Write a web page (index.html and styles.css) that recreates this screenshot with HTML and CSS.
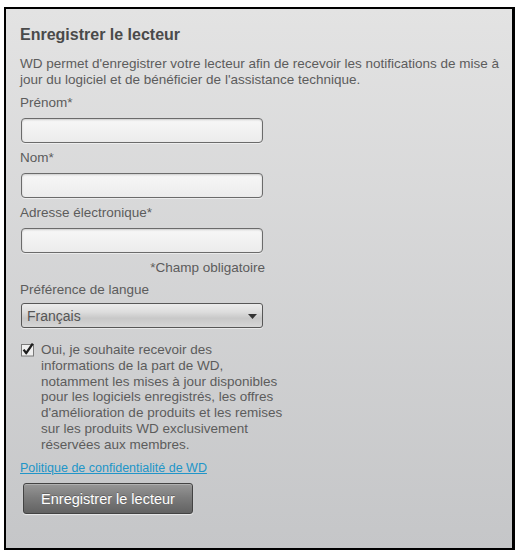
FILE: index.html
```html
<!DOCTYPE html>
<html lang="fr">
<head>
<meta charset="utf-8">
<title>Enregistrer le lecteur</title>
<link rel="stylesheet" href="styles.css">
</head>
<body>
<div class="panel">
  <h1 class="title">Enregistrer le lecteur</h1>
  <p class="intro">WD permet d'enregistrer votre lecteur afin de recevoir les notifications de mise à<br>jour du logiciel et de bénéficier de l'assistance technique.</p>
  <div class="form">
    <label class="label">Prénom*</label>
    <div class="input"></div>
    <label class="label">Nom*</label>
    <div class="input"></div>
    <label class="label">Adresse électronique*</label>
    <div class="input"></div>
    <div class="required">*Champ obligatoire</div>
    <label class="label label-lang">Préférence de langue</label>
    <div class="select">
      <span class="select-text">Français</span>
      <svg class="select-arrow" width="9" height="5" viewBox="0 0 9 5"><path d="M0 0 H9 L4.5 5 Z" fill="#333"/></svg>
    </div>
  </div>
  <div class="optin">
    <svg class="check" width="14" height="14" viewBox="0 0 14 14">
      <rect x="0.5" y="1.5" width="12" height="11.5" fill="#efefef" stroke="#7a7a7a"/>
      <path d="M2.6 6.6 L5.2 10.2 L11.8 0.6" fill="none" stroke="#1e1e1e" stroke-width="2.3" stroke-linejoin="round"/>
    </svg>
    <p class="optin-text">Oui, je souhaite recevoir des<br>informations de la part de WD,<br>notamment les mises à jour disponibles<br>pour les logiciels enregistrés, les offres<br>d'amélioration de produits et les remises<br>sur les produits WD exclusivement<br>réservées aux membres.</p>
  </div>
  <a class="privacy" href="#">Politique de confidentialité de WD</a>
  <div class="actions">
    <button class="btn" type="button">Enregistrer le lecteur</button>
  </div>
</div>
</body>
</html>
```

FILE: styles.css
```css
html, body {
  margin: 0;
  padding: 0;
  background: #ffffff;
}

body {
  font-family: "Liberation Sans", Arial, sans-serif;
  color: #5c5c5c;
}

.panel {
  box-sizing: border-box;
  width: 511px;
  height: 543px;
  margin: 7px 0 0 4px;
  border: 2px solid #000;
  border-right-width: 3px;
  background: linear-gradient(#e3e3e3, #c5c6c8);
  padding: 17px 10px 0 14px;
}

.title {
  margin: 0;
  font-size: 16px;
  line-height: 18px;
  font-weight: bold;
  color: #4a4a4a;
}

.intro {
  margin: 12px 0 0;
  font-size: 13.5px;
  line-height: 16px;
  white-space: nowrap;
}

.form {
  width: 245px;
  display: flex;
  flex-direction: column;
}

.label {
  display: block;
  margin-top: 7px;
  font-size: 13.5px;
  line-height: 16px;
}

.input {
  box-sizing: border-box;
  margin: 7px 0 0 1px;
  width: 242px;
  height: 25px;
  border: 1px solid #6b6b6b;
  border-radius: 4px;
  background: linear-gradient(#f7f7f7, #ececec);
  box-shadow: inset 0 1px 2px rgba(0, 0, 0, 0.18), 0 1px 0 rgba(255, 255, 255, 0.5);
}

.required {
  margin-top: 7px;
  text-align: right;
  font-size: 13.5px;
  line-height: 16px;
}

.label-lang {
  margin-top: 6px;
}

.select {
  box-sizing: border-box;
  margin: 5px 0 0 1px;
  width: 242px;
  height: 25px;
  border: 1px solid #575757;
  border-radius: 3px;
  background: linear-gradient(#ececec 0%, #dddddd 35%, #c8c8c8 62%, #d6d6d6 100%);
  box-shadow: 0 1px 0 rgba(255, 255, 255, 0.5);
  display: flex;
  align-items: center;
  justify-content: space-between;
  padding: 0 5px 0 5px;
}

.select-text {
  font-size: 14px;
  color: #555;
}

.select-arrow {
  display: block;
  margin-top: 1px;
}

.optin {
  display: flex;
  align-items: flex-start;
  margin-top: 14px;
}

.check {
  display: block;
  flex: none;
  margin: 1px 6px 0 1px;
}

.optin-text {
  margin: 0;
  font-size: 13.5px;
  line-height: 15.75px;
  white-space: nowrap;
}

.privacy {
  display: block;
  width: max-content;
  margin-top: 9px;
  font-size: 12.5px;
  line-height: 15px;
  color: #2195c8;
  text-decoration: underline;
}

.actions {
  margin-top: 7px;
}

.btn {
  box-sizing: border-box;
  display: block;
  margin-left: 3px;
  width: 170px;
  height: 31px;
  padding: 0;
  border: 1px solid #434343;
  border-radius: 3px;
  background: linear-gradient(#979797 0%, #7c7c7c 45%, #626262 100%);
  box-shadow: inset 0 1px 0 rgba(255, 255, 255, 0.25), 0 1px 1px rgba(255, 255, 255, 0.6);
  font-family: "Liberation Sans", Arial, sans-serif;
  font-size: 14.5px;
  color: #ffffff;
  text-shadow: 0 -1px 0 rgba(0, 0, 0, 0.25);
  cursor: pointer;
}
```
